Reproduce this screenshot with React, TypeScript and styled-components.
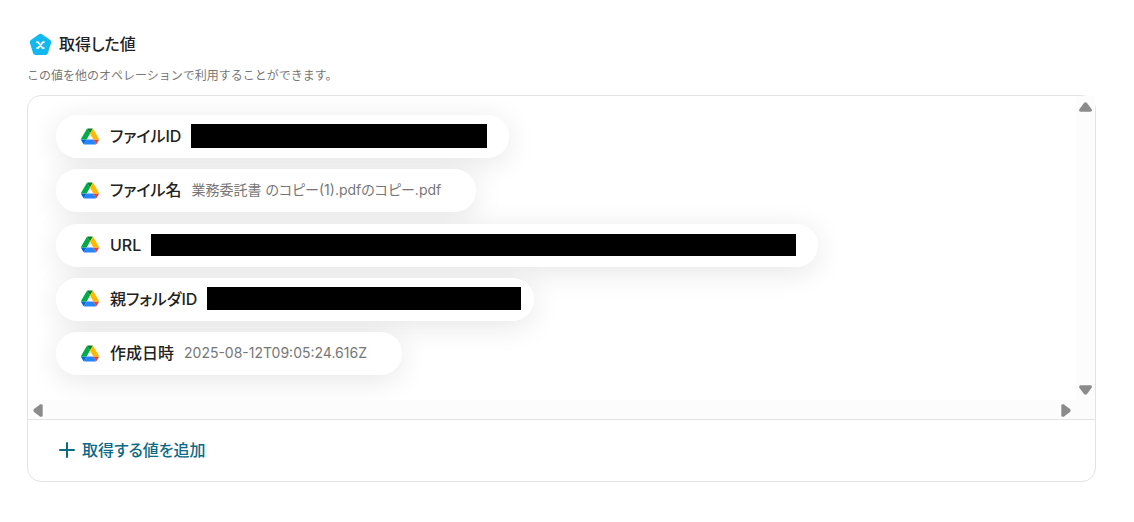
import React from "react";
import styled, { createGlobalStyle } from "styled-components";

const GlobalStyle = createGlobalStyle`
  * { box-sizing: border-box; }
  body {
    margin: 0;
    background: #fff;
    color: #222;
    font-family: Inter, "Noto Sans CJK JP", sans-serif;
    font-feature-settings: "palt";
  }
`;

const Page = styled.main`
  padding: 32px 38px 40px 27px;
`;

const Heading = styled.header`
  display: flex;
  align-items: center;
  gap: 7px;
  height: 24px;
  padding-left: 2px;
`;

const Title = styled.h1`
  margin: 0;
  font-size: 16px;
  line-height: 24px;
  font-weight: 500;
`;

const Description = styled.p`
  margin: 10px 0;
  font-size: 12px;
  line-height: 19px;
  font-feature-settings: normal;
  color: #777;
`;

const Card = styled.section`
  border: 1px solid #e3e3e3;
  border-radius: 14px;
`;

const ScrollPane = styled.div`
  display: grid;
  grid-template-columns: minmax(0, 1fr) 19px;
  grid-template-rows: auto 19px;
`;

const Viewport = styled.div`
  overflow: hidden;
  border-top-left-radius: 13px;
  padding: 19px 28px 25px;
`;

const VerticalTrack = styled.div`
  grid-column: 2;
  grid-row: 1 / span 2;
  display: flex;
  flex-direction: column;
  justify-content: space-between;
  align-items: center;
  padding: 6px 0 24px;
  background: #fcfcfc;
`;

const HorizontalTrack = styled.div`
  grid-column: 1;
  grid-row: 2;
  display: flex;
  justify-content: space-between;
  align-items: center;
  padding: 1px 5px 0;
  background: #fcfcfc;
`;

const ArrowButton = styled.button`
  display: flex;
  padding: 0;
  border: 0;
  background: none;
`;

const ValueList = styled.ul`
  isolation: isolate;
  display: flex;
  flex-direction: column;
  align-items: flex-start;
  justify-content: space-between;
  min-height: 260px;
  margin: 0;
  padding: 0;
  list-style: none;
`;

const Pill = styled.li<{ $end: number }>`
  position: relative;
  display: flex;
  align-items: center;
  height: 43px;
  padding: 0 ${(p) => p.$end}px 1px 25px;
  border-radius: 22px;
  background: #fff;
  white-space: nowrap;

  &::before {
    content: "";
    position: absolute;
    inset: 0;
    z-index: -1;
    border-radius: inherit;
    box-shadow: 0 5px 30px rgba(0, 0, 0, 0.1);
  }
`;

const PillLabel = styled.span`
  margin: 0 10px 0 11px;
  font-size: 16px;
  line-height: 24px;
  font-weight: 500;
`;

const PillValue = styled.span`
  font-size: 14px;
  line-height: 20px;
  color: #777;
`;

const Redaction = styled.span<{ $width: number; $height: number }>`
  width: ${(p) => p.$width}px;
  height: ${(p) => p.$height}px;
  background: #000;
`;

const Footer = styled.footer`
  padding: 18px 31px 19px;
  border-top: 1px solid #e3e3e3;
`;

const AddButton = styled.button`
  display: flex;
  align-items: center;
  gap: 7px;
  padding: 0;
  border: 0;
  background: none;
  color: #0b6a85;
  font: inherit;
  font-feature-settings: inherit;
  font-size: 16px;
  line-height: 24px;
  font-weight: 500;
`;

const VariableIcon = () => (
  <svg width="23" height="23" viewBox="0 0 23 23" aria-hidden="true">
    <path
      d="M10 1.2Q11.500 .2 13 1.200L21.200 7.100Q22.700 8.300 22.100 10L18.900 20.300Q18.300 22 16.500 22H6.500Q4.700 22 4.100 20.300L.9 10Q.3 8.300 1.800 7.100Z"
      fill="#12b9ee"
    />
    <path
      d="M8 9.200H9.100L13.500 15.100H14.900M14.900 9.200H13.900L9 15.100H8"
      fill="none"
      stroke="#fff"
      strokeWidth="1.700"
      strokeLinecap="round"
      strokeLinejoin="round"
    />
  </svg>
);

const DriveIcon = () => (
  <svg width="18" height="17" viewBox="0 0 87.3 78" aria-hidden="true">
    <path d="m6.6 66.850 3.850 6.650c.8 1.400 1.950 2.500 3.300 3.300l13.750-23.800h-27.500c0 1.550.4 3.100 1.200 4.500z" fill="#0066da" />
    <path d="m43.650 25-13.750-23.800c-1.350.8-2.500 1.900-3.300 3.300l-25.400 44a9.060 9.060 0 0 0 -1.200 4.500h27.500z" fill="#00ac47" />
    <path d="m73.550 76.800c1.350-.8 2.500-1.900 3.300-3.300l1.600-2.750 7.650-13.250c.8-1.400 1.200-2.950 1.200-4.500h-27.502l5.852 11.500z" fill="#ea4335" />
    <path d="m43.650 25 13.750-23.800c-1.350-.8-2.900-1.200-4.500-1.200h-18.500c-1.600 0-3.150.45-4.500 1.200z" fill="#00832d" />
    <path d="m59.800 53h-32.300l-13.750 23.800c1.350.8 2.900 1.200 4.500 1.200h50.800c1.600 0 3.150-.45 4.500-1.200z" fill="#2684fc" />
    <path d="m73.400 26.500-12.700-22c-.8-1.400-1.950-2.500-3.300-3.300l-13.750 23.800 16.150 28h27.450c0-1.550-.4-3.100-1.200-4.500z" fill="#ffba00" />
  </svg>
);

const PlusIcon = () => (
  <svg width="16" height="16" viewBox="0 0 16 16" aria-hidden="true">
    <path d="M8 1V15M1 8H15" stroke="currentColor" strokeWidth="2" strokeLinecap="round" />
  </svg>
);

const verticalArrow = { width: 13, height: 10, viewBox: "0 0 13 10" };
const horizontalArrow = { width: 10, height: 13, viewBox: "0 0 10 13" };

type Value = { label: string; text?: string; width?: number; height?: number; end: number };

const values: Value[] = [
  { label: "ファイルID", width: 296, height: 24, end: 22 },
  { label: "ファイル名", text: "業務委託書 のコピー(1).pdfのコピー.pdf", end: 35 },
  { label: "URL", width: 645, height: 22, end: 22 },
  { label: "親フォルダID", width: 314, height: 23, end: 13 },
  { label: "作成日時", text: "2025-08-12T09:05:24.616Z", end: 35 },
];

export default function App() {
  return (
    <>
      <GlobalStyle />
      <Page>
        <Heading>
          <VariableIcon />
          <Title>取得した値</Title>
        </Heading>
        <Description>この値を他のオペレーションで利用することができます。</Description>
        <Card>
          <ScrollPane>
            <Viewport>
              <ValueList>
                {values.map((v) => (
                  <Pill key={v.label} $end={v.end}>
                    <DriveIcon />
                    <PillLabel>{v.label}</PillLabel>
                    {v.text ? (
                      <PillValue>{v.text}</PillValue>
                    ) : (
                      <Redaction $width={v.width ?? 0} $height={v.height ?? 0} />
                    )}
                  </Pill>
                ))}
              </ValueList>
            </Viewport>
            <VerticalTrack>
              <ArrowButton aria-label="上へスクロール">
                <svg {...verticalArrow}><path d="M5 1Q6.500-.3 8 1L12.700 7.300Q13.300 9.700 11.500 9.700H1.500Q-.3 9.700 .3 7.300Z" fill="#8b8b8b" /></svg>
              </ArrowButton>
              <ArrowButton aria-label="下へスクロール">
                <svg {...verticalArrow}><path d="M5 9Q6.500 10.300 8 9L12.700 2.700Q13.300 .3 11.500 .3H1.500Q-.3 .3 .3 2.700Z" fill="#8b8b8b" /></svg>
              </ArrowButton>
            </VerticalTrack>
            <HorizontalTrack>
              <ArrowButton aria-label="左へスクロール">
                <svg {...horizontalArrow}><path d="M1 5Q-.3 6.500 1 8L7.300 12.700Q9.700 13.300 9.700 11.500V1.500Q9.700-.3 7.300 .3Z" fill="#8b8b8b" /></svg>
              </ArrowButton>
              <ArrowButton aria-label="右へスクロール">
                <svg {...horizontalArrow}><path d="M9 5Q10.300 6.500 9 8L2.700 12.700Q.3 13.300 .3 11.500V1.500Q.3-.3 2.700 .3Z" fill="#8b8b8b" /></svg>
              </ArrowButton>
            </HorizontalTrack>
          </ScrollPane>
          <Footer>
            <AddButton>
              <PlusIcon />
              取得する値を追加
            </AddButton>
          </Footer>
        </Card>
      </Page>
    </>
  );
}
